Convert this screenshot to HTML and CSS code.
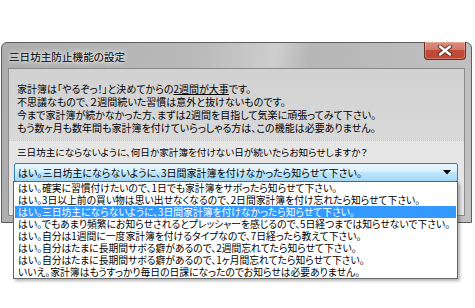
FILE: index.html
```html
<!DOCTYPE html>
<html lang="ja">
<head>
    <meta charset="UTF-8">
    <title>三日坊主防止機能の設定</title>
    <link rel="stylesheet" href="styles.css">
</head>
<body>
    <div class="page">
        <div class="window">
            <div class="titlebar">
                <span class="title">三日坊主防止機能の設定</span>
                <div class="close">
                    <svg width="16" height="11" viewBox="0 0 16 11">
                        <path d="M3 1.5 L13 9.5 M13 1.5 L3 9.5" stroke="#5a2a22" stroke-width="4.2" stroke-linecap="round"/>
                        <path d="M3 1.5 L13 9.5 M13 1.5 L3 9.5" stroke="#ffffff" stroke-width="2.4" stroke-linecap="round"/>
                    </svg>
                </div>
            </div>
            <div class="client">
                <div class="intro">
                    <p>家計簿は「やるぞっ！」と決めてからの<u>2週間が大事</u>です。</p>
                    <p>不思議なもので、２週間続いた習慣は意外と抜けないものです。</p>
                    <p>今まで家計簿が続かなかった方、まずは2週間を目指して気楽に頑張ってみて下さい。</p>
                    <p>もう数ヶ月も数年間も家計簿を付けていらっしゃる方は、この機能は必要ありません。</p>
                </div>
                <div class="question-area">
                    <p class="question">三日坊主にならないように、何日か家計簿を付けない日が続いたらお知らせしますか？</p>
                    <div class="combo">
                        <span>はい。三日坊主にならないように、3日間家計簿を付けなかったら知らせて下さい。</span>
                        <svg class="arrow" width="8" height="5" viewBox="0 0 8 5"><path d="M0 0 H8 L4 4.5 Z" fill="#000"/></svg>
                    </div>
                </div>
            </div>
            <ul class="dropdown">
                <li>はい。確実に習慣付けたいので、1日でも家計簿をサボったら知らせて下さい。</li>
                <li>はい。3日以上前の買い物は思い出せなくなるので、2日間家計簿を付け忘れたら知らせて下さい。</li>
                <li class="selected">はい。三日坊主にならないように、3日間家計簿を付けなかったら知らせて下さい。</li>
                <li>はい。でもあまり頻繁にお知らせされるとプレッシャーを感じるので、5日経つまでは知らせないで下さい。</li>
                <li>はい。自分は1週間に一度家計簿を付けるタイプなので、7日経ったら教えて下さい。</li>
                <li>はい。自分はたまに長期間サボる癖があるので、2週間忘れてたら知らせて下さい。</li>
                <li>はい。自分はたまに長期間サボる癖があるので、1ヶ月間忘れてたら知らせて下さい。</li>
                <li>いいえ。家計簿はもうすっかり毎日の日課になったのでお知らせは必要ありません。</li>
            </ul>
        </div>
    </div>
</body>
</html>
```

FILE: styles.css
```css
* {
    box-sizing: border-box;
}
body {
    margin: 0;
    background: #ffffff;
    font-family: "Noto Sans CJK JP", sans-serif;
    font-size: 10px;
    font-feature-settings: "palt";
    color: #000;
}
p {
    margin: 0;
}
.page {
    height: 308px;
    padding-top: 42px;
    padding-left: 1px;
}
.window {
    position: relative;
    width: 471px;
    height: 181px;
    border: 1px solid #5e5e5e;
    border-radius: 6px 6px 0 0;
    padding: 0 6px 6px 6px;
    background: linear-gradient(100deg, #adadad 0%, #bababa 40%, #cecece 55%, #b6b6b6 62%, #c2c2c2 100%);
}
.titlebar {
    height: 25px;
    display: flex;
    align-items: center;
    justify-content: space-between;
}
.title {
    padding-left: 1px;
    padding-top: 1px;
    font-size: 10.6px;
    color: #000;
    text-shadow: 0 0 4px #fff, 0 0 6px #fff;
}
.close {
    align-self: flex-start;
    width: 42px;
    height: 18px;
    margin-right: -1px;
    margin-top: -1px;
    border: 1px solid #6a3025;
    border-top: none;
    border-radius: 0 0 4px 4px;
    background: linear-gradient(#d8907c 0%, #d07a66 45%, #bd4c3a 50%, #c04834 100%);
    display: flex;
    align-items: center;
    justify-content: center;
    box-shadow: inset 0 0 0 1px rgba(255, 210, 200, 0.35);
}
.client {
    height: 148px;
    border: 1px solid #8a8a8a;
    background: #d6d6d6;
    box-shadow: inset 0 1px 0 #f0f0f0;
}
.intro {
    height: 71px;
    padding: 13px 8px 0 8px;
    line-height: 13px;
    background: linear-gradient(#d2d2d2, #d8d8d8);
}
.intro u {
    text-underline-offset: 1px;
}
.question-area {
    padding: 5px 8px 0 5px;
    border-top: 1px dotted #c4c4c4;
    background: #e6e6e6;
    height: 75px;
}
.question {
    padding-left: 3px;
    line-height: 13px;
    font-size: 9.6px;
}
.combo {
    margin-top: 4px;
    width: 444px;
    height: 19px;
    border: 1px solid #3c7fb1;
    border-radius: 2px;
    background: linear-gradient(#eaf6fd 0%, #d9f0fc 45%, #bee6fd 50%, #a7d9f5 100%);
    display: flex;
    align-items: center;
    justify-content: space-between;
    padding: 0 6px 0 3px;
}
.arrow {
    flex: none;
}
.dropdown {
    position: absolute;
    left: 11px;
    top: 138px;
    width: 445px;
    margin: 0;
    padding: 0;
    list-style: none;
    background: #ffffff;
    border: 1px solid #646464;
    box-shadow: 2px 2px 3px rgba(0, 0, 0, 0.3);
    z-index: 2;
    font-size: 9.8px;
}
.dropdown li {
    height: 12px;
    line-height: 12px;
    padding-left: 3px;
    margin: 0 1px;
    white-space: nowrap;
    overflow: hidden;
}
.dropdown li.selected {
    background: #3399ff;
    color: #ffffff;
}
```
